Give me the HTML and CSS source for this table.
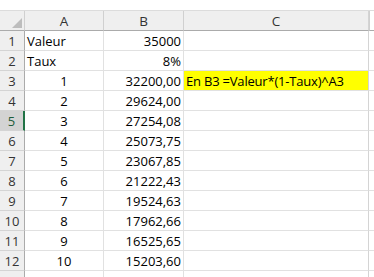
FILE: index.html
```html
<!DOCTYPE html>
<html>
<head>
<meta charset="utf-8">
<link rel="stylesheet" href="styles.css">
</head>
<body>
<div class="top"></div>
<div class="sheet">
  <div class="hd corner"><svg class="tri" width="10" height="10" viewBox="0 0 10 10"><polygon points="10,0 10,10 0,10" fill="#bdbdbd"/></svg></div>
  <div class="hd col">A</div>
  <div class="hd col">B</div>
  <div class="hd col">C</div>
  <div class="hd col end"></div>

  <div class="hd rn">1</div><div class="c l">Valeur</div><div class="c r">35000</div><div class="c"></div><div class="c end"></div>
  <div class="hd rn">2</div><div class="c l">Taux</div><div class="c r">8%</div><div class="c"></div><div class="c end"></div>
  <div class="hd rn">3</div><div class="c m">1</div><div class="c r">32200,00</div><div class="c yel">En B3 =Valeur*(1-Taux)^A3</div><div class="c end"></div>
  <div class="hd rn">4</div><div class="c m">2</div><div class="c r">29624,00</div><div class="c"></div><div class="c end"></div>
  <div class="hd rn sel">5</div><div class="c m">3</div><div class="c r">27254,08</div><div class="c"></div><div class="c end"></div>
  <div class="hd rn">6</div><div class="c m">4</div><div class="c r">25073,75</div><div class="c"></div><div class="c end"></div>
  <div class="hd rn">7</div><div class="c m">5</div><div class="c r">23067,85</div><div class="c"></div><div class="c end"></div>
  <div class="hd rn">8</div><div class="c m">6</div><div class="c r">21222,43</div><div class="c"></div><div class="c end"></div>
  <div class="hd rn">9</div><div class="c m">7</div><div class="c r">19524,63</div><div class="c"></div><div class="c end"></div>
  <div class="hd rn">10</div><div class="c m">8</div><div class="c r">17962,66</div><div class="c"></div><div class="c end"></div>
  <div class="hd rn">11</div><div class="c m">9</div><div class="c r">16525,65</div><div class="c"></div><div class="c end"></div>
  <div class="hd rn">12</div><div class="c m">10</div><div class="c r">15203,60</div><div class="c"></div><div class="c end"></div>
  <div class="hd rn last"></div><div class="c last"></div><div class="c last"></div><div class="c last"></div><div class="c end last"></div>
</div>
</body>
</html>
```
FILE: styles.css
```css
html, body { margin: 0; padding: 0; background: #fff; }
body { width: 374px; height: 277px; overflow: hidden; font-family: "Open Sans", "Liberation Sans", sans-serif; font-size: 13px; color: #000; }
.top { height: 10px; border-bottom: 1px solid #dcdcdc; background: #fff; }
.sheet {
  display: grid;
  grid-template-columns: 25px 79px 80px 185px 5px;
  grid-template-rows: 20px repeat(12, 20px) 6px;
}
.sheet > div { box-sizing: border-box; border-right: 1px solid #e1e1e1; border-bottom: 1px solid #e1e1e1; display: flex; align-items: center; white-space: nowrap; }
.sheet > div.last { border-bottom: none; }
.hd { background: #efefef; color: #333; }
.hd.col { justify-content: center; border-right-color: #d0d0d0; border-bottom-color: #ababab; font-size: 13.5px; }
.corner { position: relative; border-bottom-color: #ababab !important; border-right-color: #d0d0d0 !important; }
.tri { position: absolute; right: 2px; bottom: 2px; }
.hd.rn { justify-content: center; border-right-color: #ababab; border-bottom-color: #d4d4d4; }
.hd.rn.sel { background: #d3d3d3; color: #1f5c3a; border-right: 2px solid #217346; }
.c.l { padding-left: 2px; }
.c.m { justify-content: center; }
.c.r { justify-content: flex-end; padding-right: 2px; }
.c.yel { background: #ffff00; padding-left: 2px; letter-spacing: -0.2px; }
.end { border-right: none !important; background: #fff; }
.hd.col.end { background: #fff; border-left: 1px solid #d0d0d0; }
.sheet > div:nth-child(5n+4) { border-right-color: #d4d4d4; }
```
